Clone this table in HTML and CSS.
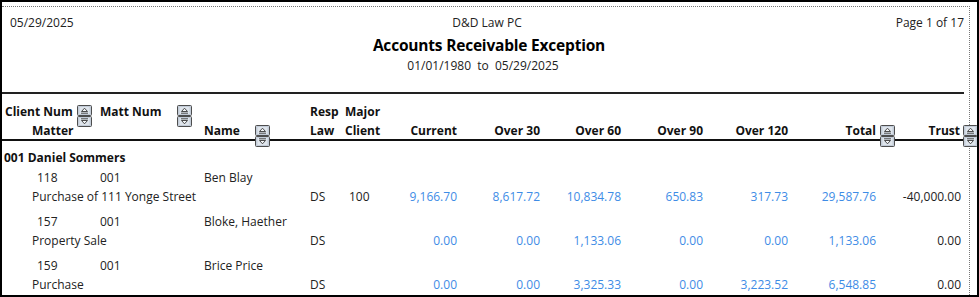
FILE: index.html
```html
<!DOCTYPE html>
<html>
<head>
<meta charset="utf-8">
<link rel="stylesheet" href="styles.css">
</head>
<body>
<div class="frame">
  <div class="page">
    <div class="rpt-head">
      <div class="top-row">
        <span class="left">05/29/2025</span>
        <span class="mid">D&amp;D Law PC</span>
        <span class="right">Page 1 of 17</span>
      </div>
      <div class="title">Accounts Receivable Exception</div>
      <div class="range">01/01/1980&nbsp;&nbsp;to&nbsp;&nbsp;05/29/2025</div>
    </div>

    <div class="col-head grid">
      <div class="c1 l1 pl3">Client Num</div>
      <div class="c1 l2 pl30">Matter</div>
      <div class="c2 l1 pl2">Matt Num</div>
      <div class="c3 l2 pl2">Name</div>
      <div class="c4 l1 pl2">Resp</div>
      <div class="c4 l2 pl2">Law</div>
      <div class="c5 l1 pl2">Major</div>
      <div class="c5 l2 pl2">Client</div>
      <div class="c6 l2 num hd">Current</div>
      <div class="c7 l2 num hd">Over 30</div>
      <div class="c8 l2 num hd">Over 60</div>
      <div class="c9 l2 num hd">Over 90</div>
      <div class="c10 l2 num hd">Over 120</div>
      <div class="c11 l2 num hd">Total</div>
      <div class="c12 l2 num hd2">Trust</div>

      <svg class="sorter s-client" width="15" height="22" viewBox="0 0 15 22"><use href="#sort"/></svg>
      <svg class="sorter s-matt" width="15" height="22" viewBox="0 0 15 22"><use href="#sort"/></svg>
      <svg class="sorter s-name" width="15" height="22" viewBox="0 0 15 22"><use href="#sort"/></svg>
      <svg class="sorter s-total" width="15" height="22" viewBox="0 0 15 22"><use href="#sort"/></svg>
      <svg class="sorter s-trust" width="15" height="22" viewBox="0 0 15 22"><use href="#sort"/></svg>
    </div>

    <div class="group">001 Daniel Sommers</div>

    <div class="rec grid">
      <div class="c1 l1 pl35">118</div>
      <div class="c2 l1 pl2">001</div>
      <div class="c3 l1 pl2">Ben Blay</div>
      <div class="desc l2">Purchase of 111 Yonge Street</div>
      <div class="c4 l2 pl2">DS</div>
      <div class="c5 l2 pl6">100</div>
      <div class="c6 l2 num blue">9,166.70</div>
      <div class="c7 l2 num blue">8,617.72</div>
      <div class="c8 l2 num blue">10,834.78</div>
      <div class="c9 l2 num blue">650.83</div>
      <div class="c10 l2 num blue">317.73</div>
      <div class="c11 l2 num blue">29,587.76</div>
      <div class="c12 l2 num">-40,000.00</div>
    </div>

    <div class="rec grid">
      <div class="c1 l1 pl35">157</div>
      <div class="c2 l1 pl2">001</div>
      <div class="c3 l1 pl2">Bloke, Haether</div>
      <div class="desc l2">Property Sale</div>
      <div class="c4 l2 pl2">DS</div>
      <div class="c5 l2 pl6"></div>
      <div class="c6 l2 num blue">0.00</div>
      <div class="c7 l2 num blue">0.00</div>
      <div class="c8 l2 num blue">1,133.06</div>
      <div class="c9 l2 num blue">0.00</div>
      <div class="c10 l2 num blue">0.00</div>
      <div class="c11 l2 num blue">1,133.06</div>
      <div class="c12 l2 num">0.00</div>
    </div>

    <div class="rec grid">
      <div class="c1 l1 pl35">159</div>
      <div class="c2 l1 pl2">001</div>
      <div class="c3 l1 pl2">Brice Price</div>
      <div class="desc l2">Purchase</div>
      <div class="c4 l2 pl2">DS</div>
      <div class="c5 l2 pl6"></div>
      <div class="c6 l2 num blue">0.00</div>
      <div class="c7 l2 num blue">0.00</div>
      <div class="c8 l2 num blue">3,325.33</div>
      <div class="c9 l2 num blue">0.00</div>
      <div class="c10 l2 num blue">3,223.52</div>
      <div class="c11 l2 num blue">6,548.85</div>
      <div class="c12 l2 num">0.00</div>
    </div>
  </div>
</div>

<svg class="defs" width="0" height="0">
  <defs>
    <g id="sort">
      <rect x="0.5" y="0.5" width="14" height="10" rx="1" fill="#c3ccd8" stroke="#4d4d4d"/>
      <rect x="2.5" y="2" width="10" height="7" fill="#dfe5ec"/>
      <path d="M4.5 6.5 L7.5 3.2 L10.5 6.5 Z" fill="#f4f6f8" stroke="#3a3a3a" stroke-width="0.9"/>
      <line x1="4" y1="8.2" x2="11" y2="8.2" stroke="#3a3a3a" stroke-width="0.9"/>
      <rect x="0.5" y="11.5" width="14" height="10" rx="1" fill="#c3ccd8" stroke="#4d4d4d"/>
      <rect x="2.5" y="13" width="10" height="7" fill="#dfe5ec"/>
      <path d="M4.5 15.5 L7.5 18.8 L10.5 15.5 Z" fill="#f4f6f8" stroke="#3a3a3a" stroke-width="0.9"/>
      <line x1="4" y1="13.8" x2="11" y2="13.8" stroke="#3a3a3a" stroke-width="0.9"/>
    </g>
  </defs>
</svg>
</body>
</html>
```

FILE: styles.css
```css
html, body {
  margin: 0;
  padding: 0;
  background: #fff;
}

body {
  font-family: "Open Sans", "Noto Sans", "Liberation Sans", sans-serif;
  font-size: 12px;
  color: #222;
}

.frame {
  box-sizing: border-box;
  width: 979px;
  height: 297px;
  border: 2px solid #000;
  overflow: hidden;
}

.page {
  margin-top: 4px;
  width: 967px;
  height: 300px;
  border-top: 1px dotted #777;
  border-right: 1px dotted #777;
}

.rpt-head {
  height: 85px;
  margin-right: 5px;
  border-bottom: 2px solid #222;
}

.top-row {
  display: grid;
  grid-template-columns: 1fr auto 1fr;
  padding: 8px 0 0 8px;
  line-height: 16px;
  font-size: 12px;
}

.top-row .right {
  text-align: right;
}

.title {
  margin-top: 3px;
  padding-left: 12px;
  text-align: center;
  font-weight: 700;
  font-size: 15.5px;
  line-height: 22px;
  color: #000;
  letter-spacing: -0.2px;
}

.range {
  margin-top: 2px;
  text-align: center;
  line-height: 16px;
}

.grid {
  display: grid;
  grid-template-columns: 96px 104px 106px 35px 37px 78px 83px 81px 82px 85px 88px 85px;
  grid-template-rows: 19px 19px;
  line-height: 19px;
  white-space: nowrap;
}

.col-head {
  position: relative;
  box-sizing: border-box;
  height: 47px;
  padding-top: 8px;
  margin-right: -8px;
  border-bottom: 2px solid #111;
  font-weight: 700;
  font-size: 12px;
  color: #111;
}

.l1 { grid-row: 1; }
.l2 { grid-row: 2; }
.c1 { grid-column: 1; }
.c2 { grid-column: 2; }
.c3 { grid-column: 3; }
.c4 { grid-column: 4; }
.c5 { grid-column: 5; }
.c6 { grid-column: 6; }
.c7 { grid-column: 7; }
.c8 { grid-column: 8; }
.c9 { grid-column: 9; }
.c10 { grid-column: 10; }
.c11 { grid-column: 11; }
.c12 { grid-column: 12; }
.desc { grid-column: 1 / 4; padding-left: 30px; }

.pl2 { padding-left: 2px; }
.pl3 { padding-left: 3px; }
.pl6 { padding-left: 6px; }
.pl30 { padding-left: 30px; }
.pl35 { padding-left: 35px; }

.num {
  text-align: right;
  padding-right: 1px;
}

.hd { padding-right: 1px; }
.hd2 { padding-right: 2px; }

.blue { color: #3e8ce6; }

.sorter {
  position: absolute;
  display: block;
}
.s-client { left: 75px; top: 11px; }
.s-matt { left: 175px; top: 11px; }
.s-name { left: 253px; top: 31px; }
.s-total { left: 878px; top: 31px; }
.s-trust { left: 961px; top: 31px; }

.group {
  padding: 7px 0 0 2px;
  line-height: 19px;
  font-weight: 700;
  font-size: 12px;
  color: #111;
}

.rec {
  margin-top: 1px;
  padding-bottom: 5px;
}

.defs {
  position: absolute;
  width: 0;
  height: 0;
}
```
